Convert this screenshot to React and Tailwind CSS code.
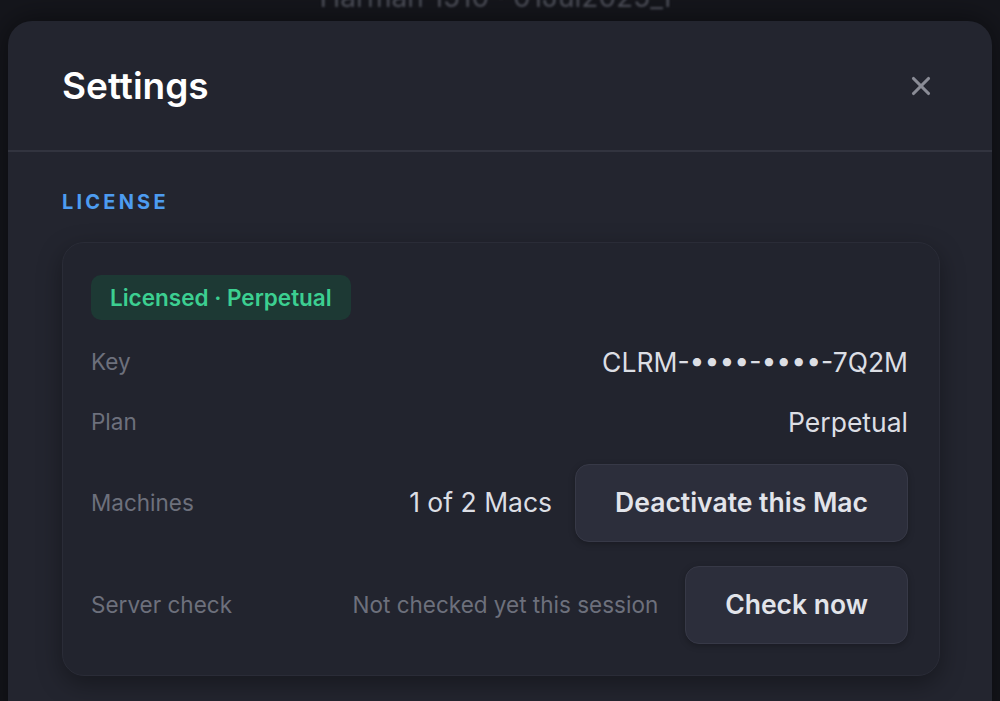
import { X } from "lucide-react";

const font = { fontFamily: "Inter, 'Noto Sans', sans-serif" };

function Row({ label, children, gap = "gap-[23px]" }) {
  return (
    <div className="flex items-center justify-between">
      <span className="text-[22.5px] text-[#6d707c]">{label}</span>
      <div className={`flex items-center ${gap}`}>{children}</div>
    </div>
  );
}

function Btn({ children }) {
  return (
    <button className="h-[78px] px-[39px] rounded-[14px] bg-[#2c2e3b] border border-[#373947] text-[26.5px] font-semibold text-[#e2e4ea] shadow-[0_2px_6px_rgba(0,0,0,0.25)]">
      {children}
    </button>
  );
}

export default function App() {
  return (
    <div className="relative h-[701px] w-[1000px] overflow-hidden bg-[#15161c]" style={font}>
      {/* page behind the dialog */}
      <div className="absolute left-0 right-0 top-[-24px] text-center text-[28px] text-[#4e505a] blur-[1px]">
        Harman 1510 · 01Jul2025_F
      </div>

      <div className="relative pt-[21px] px-[8px]">
        <div className="h-[720px] rounded-[24px] bg-[#23252f] shadow-[0_0_30px_rgba(0,0,0,0.5)]">
          {/* Header */}
          <div className="h-[131px] flex items-center justify-between pl-[54px] pr-[56px] border-b-2 border-[#32343f]">
            <h1 className="text-[37px] font-semibold text-white">Settings</h1>
            <X className="w-[30px] h-[30px] text-[#8a8c96]" strokeWidth={2.5} />
          </div>

          {/* Body */}
          <div className="pl-[54px] pr-[52px] pt-[38px]">
            <div className="text-[20px] font-bold tracking-[0.16em] text-[#4d9cf0] leading-[24px]">LICENSE</div>

            <div className="mt-[28px] rounded-[22px] bg-[#22242e] border border-[#2a2c37] shadow-[0_8px_24px_rgba(0,0,0,0.35)] pl-[28px] pr-[31px] pt-[32px] pb-[31px] flex flex-col gap-[24px]">
              <div className="flex">
                <span className="h-[45px] flex items-center px-[19px] rounded-[10px] bg-[#1d3934] text-[22.5px] font-semibold text-[#3ccf91]">
                  Licensed · Perpetual
                </span>
              </div>

              <div className="h-[36px]">
                <Row label="Key">
                  <span className="text-[26.5px] text-[#dcdee4] leading-[36px]">CLRM-••••-••••-7Q2M</span>
                </Row>
              </div>

              <div className="h-[36px]">
                <Row label="Plan">
                  <span className="text-[26.5px] text-[#dcdee4] leading-[36px]">Perpetual</span>
                </Row>
              </div>

              <Row label="Machines">
                <span className="text-[26.5px] text-[#dcdee4]">1 of 2 Macs</span>
                <Btn>Deactivate this Mac</Btn>
              </Row>

              <Row label="Server check" gap="gap-[27px]">
                <span className="text-[22.5px] text-[#6d707c]">Not checked yet this session</span>
                <Btn>Check now</Btn>
              </Row>
            </div>
          </div>
        </div>
      </div>
    </div>
  );
}
